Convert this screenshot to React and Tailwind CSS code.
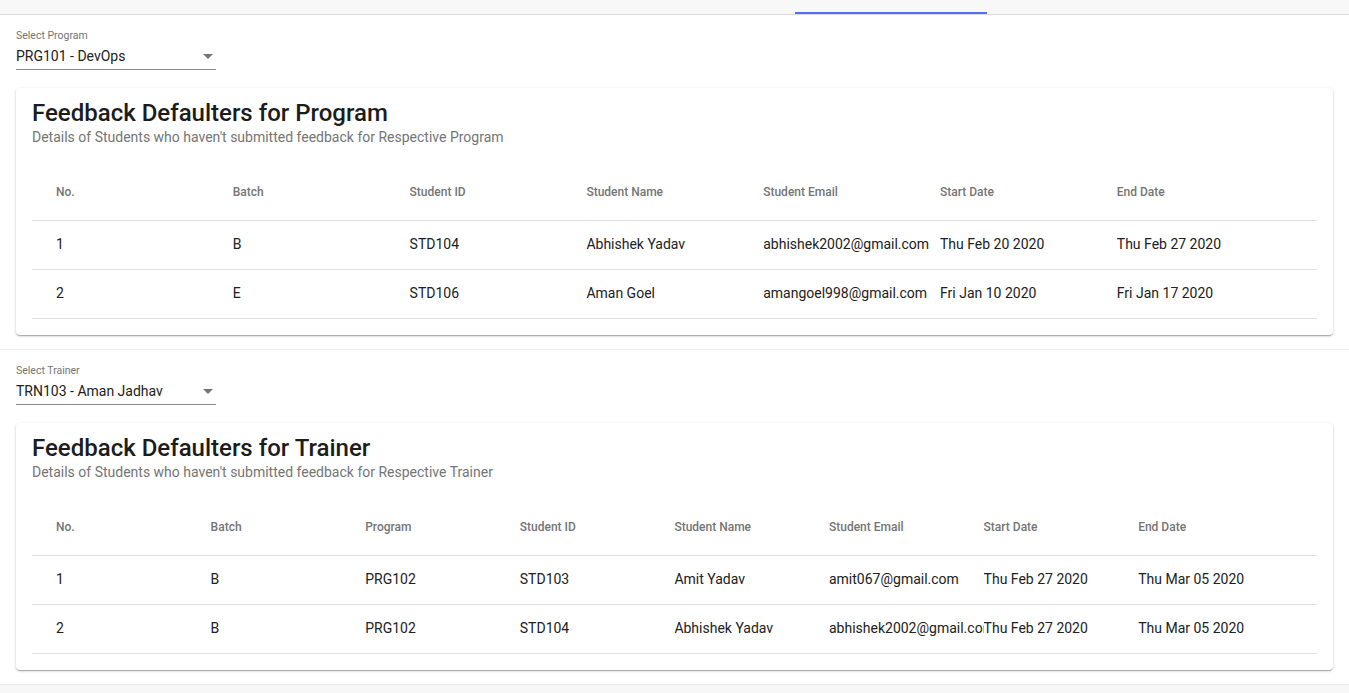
import React from "react";

const font = { fontFamily: "Roboto, 'Liberation Sans', sans-serif" };

function Select({ label, value }) {
  return (
    <div className="w-[200px]">
      <div className="text-[10.5px] leading-[12px] text-[#757575]">{label}</div>
      <div className="mt-[4px] flex items-center border-b border-[#8a8a8a] pb-[3px]">
        <div className="flex-1 text-[14px] leading-[20px] text-[#212121]">{value}</div>
        <svg viewBox="0 0 24 24" className="-mr-1 h-6 w-6 -my-[2px]" fill="#757575">
          <path d="M7 10l5 5 5-5z" />
        </svg>
      </div>
    </div>
  );
}

function Card({ title, subtitle, headers, rows, cols }) {
  return (
    <div className="mt-[18px] rounded-[4px] bg-white px-4 pt-[11px] pb-4 shadow-[0_1px_3px_0_rgba(0,0,0,0.2),0_1px_1px_0_rgba(0,0,0,0.14),0_2px_1px_-1px_rgba(0,0,0,0.12)]">
      <div className="text-[24px] leading-[28px] font-medium text-[#1c1c1c]">{title}</div>
      <div className="text-[14px] leading-[20px] text-[#757575]">{subtitle}</div>
      <div className="mt-[17px]">
        <div className={`grid ${cols} h-[57px] items-center border-b border-[#e0e0e0] pl-6 text-[12px] font-medium text-[#757575]`}>
          {headers.map((h) => (
            <div key={h} className="overflow-hidden whitespace-nowrap">{h}</div>
          ))}
        </div>
        {rows.map((r, i) => (
          <div key={i} className={`grid ${cols} h-[49px] items-center border-b border-[#e0e0e0] pl-6 pb-[1px] text-[14px] text-[#212121]`}>
            {r.map((c, j) => (
              <div key={j} className="overflow-hidden whitespace-nowrap">{c}</div>
            ))}
          </div>
        ))}
      </div>
    </div>
  );
}

export default function App() {
  return (
    <div className="min-h-screen bg-[#f7f7f7]" style={font}>
      <div className="relative h-[15px] border-b border-[#dadada] bg-[#f8f8f8]">
        <div className="absolute bottom-0 left-[795px] h-[2px] w-[192px] bg-[#536dfe]" />
      </div>
      <div className="bg-white px-4 pt-[15px] pb-[14px] shadow-[0_1px_2px_rgba(0,0,0,0.06)]">
        <Select label="Select Program" value="PRG101 - DevOps" />
        <Card
          title="Feedback Defaulters for Program"
          subtitle="Details of Students who haven't submitted feedback for Respective Program"
          cols="grid-cols-[176.8px_176.8px_176.8px_176.8px_176.8px_176.8px_1fr]"
          headers={["No.", "Batch", "Student ID", "Student Name", "Student Email", "Start Date", "End Date"]}
          rows={[
            ["1", "B", "STD104", "Abhishek Yadav", "abhishek2002@gmail.com", "Thu Feb 20 2020", "Thu Feb 27 2020"],
            ["2", "E", "STD106", "Aman Goel", "amangoel998@gmail.com", "Fri Jan 10 2020", "Fri Jan 17 2020"],
          ]}
        />
      </div>
      <div className="mt-[1px] bg-white px-4 pt-[15px] pb-[14px] shadow-[0_1px_2px_rgba(0,0,0,0.06)]">
        <Select label="Select Trainer" value="TRN103 - Aman Jadhav" />
        <Card
          title="Feedback Defaulters for Trainer"
          subtitle="Details of Students who haven't submitted feedback for Respective Trainer"
          cols="grid-cols-[154.6px_154.6px_154.6px_154.6px_154.6px_154.6px_154.6px_1fr]"
          headers={["No.", "Batch", "Program", "Student ID", "Student Name", "Student Email", "Start Date", "End Date"]}
          rows={[
            ["1", "B", "PRG102", "STD103", "Amit Yadav", "amit067@gmail.com", "Thu Feb 27 2020", "Thu Mar 05 2020"],
            ["2", "B", "PRG102", "STD104", "Abhishek Yadav", "abhishek2002@gmail.com", "Thu Feb 27 2020", "Thu Mar 05 2020"],
          ]}
        />
      </div>
    </div>
  );
}
